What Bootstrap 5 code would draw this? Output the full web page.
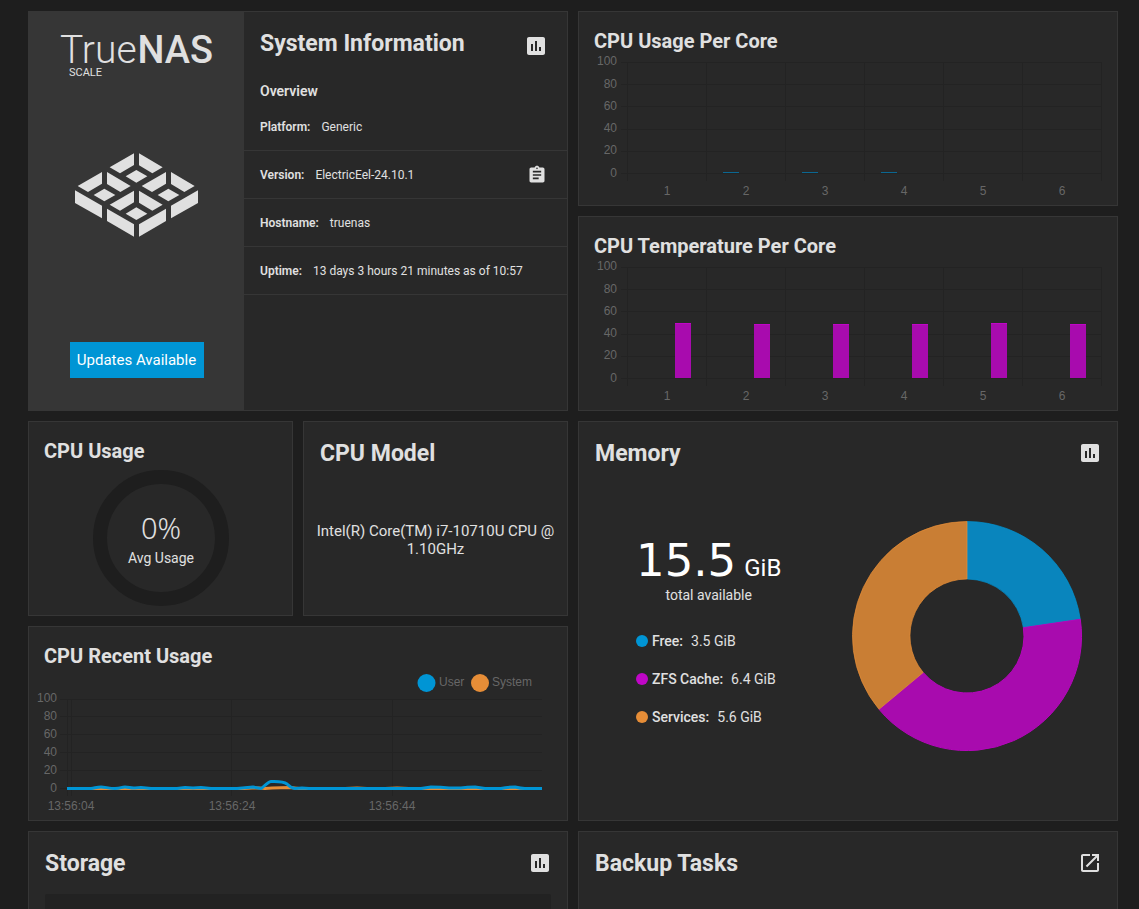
<!DOCTYPE html>
<html lang="en">
<head>
<meta charset="utf-8">
<meta name="viewport" content="width=device-width, initial-scale=1">
<title>TrueNAS Dashboard</title>
<link href="https://cdn.jsdelivr.net/npm/bootstrap@5.3.0/dist/css/bootstrap.min.css" rel="stylesheet">
<style>
  :root { --bg1: #1e1e1e; --bg2: #282828; --lines: #363636; --fg: #e0e0e0; --blue: #0095d5; --violet: #c006c7; --orange: #e68d37; }
  body { background: var(--bg1); color: var(--fg); font-family: Roboto, sans-serif; font-size: 14px; }
  .dashboard { display: grid; grid-template-columns: repeat(4, minmax(0, 1fr)); grid-auto-rows: 195px; gap: 10px; padding: 11px 21px 11px 28px; }
  .span-2 { grid-column: span 2; }
  .tall { grid-row: span 2; }
  .widget { background: var(--bg2); border: 1px solid var(--lines); min-width: 0; overflow: hidden; }
  .widget h3 { font-size: 23px; line-height: 28px; font-weight: 700; margin: 0; }
  .widget-head { height: 62px; padding: 0 15px 0 16px; }
  .widget-head h3 { padding-top: 2px; }
  .widget .chart-head { height: 44px; padding: 15px 15px 0; font-size: 20px; }
  .icon-btn { background: none; border: 0; padding: 0; color: inherit; line-height: 0; display: block; }
  .icon-btn svg { fill: currentColor; }
  .brand-pane { width: 215px; background: var(--lines); padding: 20px 0 32px; }
  .wordmark { overflow: visible; margin-bottom: 69px; }
  .update-btn { background: var(--blue); color: #fff; border: 0; border-radius: 0; width: 134px; height: 36px; padding: 1px 0 0; font-size: 15px; }
  .info-head { height: 68px; padding: 0 19px 22px 16px; }
  .overview { font-size: 14px; line-height: 22px; font-weight: 600; margin: 0 0 1px; padding: 0 16px; }
  .info-row { height: 48px; border-bottom: 1px solid var(--lines); padding: 0 20px 0 16px; font-size: 12px; gap: 11px; }
  .info-row strong { font-weight: 600; }
  .plot { width: 100%; display: block; overflow: visible; font: 12px "Liberation Sans", sans-serif; }
  .plot text { fill: #676767; }
  .plot .gridline { stroke: #232323; stroke-width: 1; fill: none; }
  .gauge-value { font: 300 29px "Noto Sans", sans-serif; }
  .cpu-model { font-size: 15px; line-height: 18px; padding: 38px 12px 0; }
  .memory-body { padding: 37px 35px 0 57px; }
  .mem-total { font: 45px/48px "DejaVu Sans", sans-serif; color: #fff; }
  .mem-unit { font: 24px/28px Roboto, sans-serif; color: #fff; }
  .legend-row { height: 38px; }
  .legend-row strong { font-weight: 500; }
  .dot { width: 12px; height: 12px; border-radius: 50%; }
  .dot-free { background: var(--blue); }
  .dot-cache { background: var(--violet); }
  .dot-services { background: var(--orange); }
  .pool-box { background: #222; height: 120px; margin: 0 16px; border-radius: 2px; }
</style>
</head>
<body class="vh-100 overflow-hidden">
<svg class="d-none" aria-hidden="true">
  <symbol id="i-chart" viewBox="0 0 24 24"><path d="M19 3H5c-1.1 0-2 .9-2 2v14c0 1.100.9 2 2 2h14c1.100 0 2-.9 2-2V5c0-1.100-.9-2-2-2zM9 17H7v-7h2v7zm4 0h-2V7h2v10zm4 0h-2v-4h2v4z"/></symbol>
  <symbol id="i-clip" viewBox="0 0 24 24"><path d="M19 3h-4.180C14.400 1.840 13.300 1 12 1c-1.300 0-2.400.84-2.820 2H5c-1.100 0-2 .9-2 2v14c0 1.100.9 2 2 2h14c1.100 0 2-.9 2-2V5c0-1.100-.9-2-2-2zm-7 0c.55 0 1 .45 1 1s-.45 1-1 1-1-.45-1-1 .45-1 1-1zm2 14H7v-2h7v2zm3-4H7v-2h10v2zm0-4H7V7h10v2z"/></symbol>
  <symbol id="i-open" viewBox="0 0 24 24"><path d="M19 19H5V5h7V3H5c-1.110 0-2 .9-2 2v14c0 1.100.89 2 2 2h14c1.100 0 2-.9 2-2v-7h-2v7zM14 3v2h3.590l-9.830 9.830 1.410 1.410L19 6.410V10h2V3h-7z"/></symbol>
  <symbol id="cell" viewBox="0 0 369 252" overflow="visible"><path d="M177 1v35l-42 25-31-18zM192 1l71 42-31 18-40-24zM184 51l33 19-33 19-32-19z"/></symbol>
</svg>

<main class="dashboard">

  <section class="widget span-2 tall d-flex">
    <div class="brand-pane d-flex flex-column align-items-center flex-shrink-0">
      <svg class="wordmark" width="156" height="52" viewBox="0 0 156 52" fill="#e0e0e0" role="img" aria-label="TrueNAS SCALE" font-family="Roboto, sans-serif">
        <text x="1" y="31" font-size="39" font-weight="300">True</text>
        <text x="154" y="31" font-size="38" font-weight="500" text-anchor="end">NAS</text>
        <text x="10" y="44" font-size="11" font-weight="400">SCALE</text>
      </svg>
      <svg class="mb-auto" width="123" height="84" viewBox="0 0 369 252" fill="#e0e0e0" aria-hidden="true">
        <use href="#cell" width="369" height="252"/>
        <use href="#cell" x="-96" y="56" width="369" height="252"/>
        <use href="#cell" x="96" y="56" width="369" height="252"/>
        <use href="#cell" y="112" width="369" height="252"/>
        <path d="M0 112l81 46v38L0 150zM96 167l81 47v37l-81-47zM192 214l81-47v37l-81 47zM288 158l81-46v38l-81 46z"/>
      </svg>
      <button class="btn update-btn" type="button">Updates Available</button>
    </div>
    <div class="flex-grow-1">
      <div class="info-head d-flex align-items-end justify-content-between">
        <h3>System Information</h3>
        <button class="icon-btn" type="button" aria-label="System reports"><svg width="24" height="24"><use href="#i-chart"/></svg></button>
      </div>
      <h4 class="overview">Overview</h4>
      <div class="info-row d-flex align-items-center"><strong>Platform:</strong><span>Generic</span></div>
      <div class="info-row d-flex align-items-center"><strong>Version:</strong><span>ElectricEel-24.10.1</span>
        <button class="icon-btn ms-auto" type="button" aria-label="Copy version"><svg width="20" height="20"><use href="#i-clip"/></svg></button></div>
      <div class="info-row d-flex align-items-center"><strong>Hostname:</strong><span>truenas</span></div>
      <div class="info-row d-flex align-items-center"><strong>Uptime:</strong><span>13 days 3 hours 21 minutes as of 10:57</span></div>
    </div>
  </section>

  <section class="widget span-2">
    <h3 class="chart-head">CPU Usage Per Core</h3>
    <svg class="plot" viewBox="0 0 538 148" role="img" aria-label="CPU usage per core">
      <path class="gridline" d="M42 6.500H523M42 28.500H523M42 50.500H523M42 73.500H523M42 95.500H523M42 117.500H523M48.500 6V125M127.500 6V125M206.500 6V125M285.500 6V125M364.500 6V125M443.500 6V125M522.500 6V125"/>
      <g text-anchor="end"><text x="38" y="9">100</text><text x="38" y="32">80</text><text x="38" y="54">60</text><text x="38" y="76">40</text><text x="38" y="98">20</text><text x="38" y="121">0</text></g>
      <g text-anchor="middle"><text x="88" y="139">1</text><text x="167" y="139">2</text><text x="246" y="139">3</text><text x="325" y="139">4</text><text x="404" y="139">5</text><text x="483" y="139">6</text></g>
      <path fill="#0b6791" d="M144 116h16v1h-16zM223 116h16v1h-16zM302 116h16v1h-16z"/>
    </svg>
  </section>

  <section class="widget span-2">
    <h3 class="chart-head">CPU Temperature Per Core</h3>
    <svg class="plot" viewBox="0 0 538 148" role="img" aria-label="CPU temperature per core">
      <path class="gridline" d="M42 6.500H523M42 28.500H523M42 50.500H523M42 73.500H523M42 95.500H523M42 117.500H523M48.500 6V125M127.500 6V125M206.500 6V125M285.500 6V125M364.500 6V125M443.500 6V125M522.500 6V125"/>
      <g text-anchor="end"><text x="38" y="9">100</text><text x="38" y="32">80</text><text x="38" y="54">60</text><text x="38" y="76">40</text><text x="38" y="98">20</text><text x="38" y="121">0</text></g>
      <g text-anchor="middle"><text x="88" y="139">1</text><text x="167" y="139">2</text><text x="246" y="139">3</text><text x="325" y="139">4</text><text x="404" y="139">5</text><text x="483" y="139">6</text></g>
      <path fill="#a80bae" d="M96 62h16v55H96zM175 63h16v54h-16zM254 63h16v54h-16zM333 63h16v54h-16zM412 62h16v55h-16zM491 63h16v54h-16z"/>
      <path fill="#c006c7" d="M96 62h16v1H96zM175 63h16v1h-16zM254 63h16v1h-16zM333 63h16v1h-16zM412 62h16v1h-16zM491 63h16v1h-16z"/>
    </svg>
  </section>

  <section class="widget">
    <h3 class="chart-head">CPU Usage</h3>
    <svg class="d-block mx-auto mt-1" width="136" height="136" viewBox="0 0 136 136" fill="#e0e0e0" text-anchor="middle" role="img" aria-label="0% average usage">
      <circle cx="68" cy="68" r="61" fill="none" stroke="#1e1e1e" stroke-width="14"/>
      <text class="gauge-value" x="68" y="69">0%</text>
      <text x="68" y="93" font-size="14">Avg Usage</text>
    </svg>
  </section>

  <section class="widget">
    <div class="widget-head d-flex align-items-center"><h3>CPU Model</h3></div>
    <p class="cpu-model text-center m-0">Intel(R) Core(TM) i7-10710U CPU @ 1.10GHz</p>
  </section>

  <section class="widget span-2 tall">
    <div class="widget-head d-flex align-items-center justify-content-between">
      <h3>Memory</h3>
      <button class="icon-btn" type="button" aria-label="Memory reports"><svg width="24" height="24"><use href="#i-chart"/></svg></button>
    </div>
    <div class="memory-body d-flex align-items-start justify-content-between">
      <div class="pt-3">
        <div class="d-flex align-items-baseline gap-2"><span class="mem-total">15.5</span><span class="mem-unit">GiB</span></div>
        <div class="text-center">total available</div>
        <div class="pt-3">
          <div class="legend-row d-flex align-items-center"><span class="dot dot-free me-1"></span><strong class="me-2">Free:</strong>3.5 GiB</div>
          <div class="legend-row d-flex align-items-center"><span class="dot dot-cache me-1"></span><strong class="me-2">ZFS Cache:</strong>6.4 GiB</div>
          <div class="legend-row d-flex align-items-center"><span class="dot dot-services me-1"></span><strong class="me-2">Services:</strong>5.6 GiB</div>
        </div>
      </div>
      <svg width="230" height="230" viewBox="-115 -115 230 230" role="img" aria-label="Memory split">
        <path fill="#0985bd" stroke="#0095d5" stroke-opacity=".7" d="M0-114.500A114.500 114.500 0 0 1 113.300-16.700L56.400-8.300A57 57 0 0 0 0-57z"/>
        <path fill="#a80bae" stroke="#b507bb" d="M113.300-16.700A114.500 114.500 0 0 1-88 73.300L-43.800 36.500A57 57 0 0 0 56.400-8.300z"/>
        <path fill="#c97e34" stroke="#e68d37" stroke-opacity=".7" d="M-88 73.300A114.500 114.500 0 0 1 0-114.500V-57A57 57 0 0 0-43.800 36.500z"/>
      </svg>
    </div>
  </section>

  <section class="widget span-2">
    <h3 class="chart-head">CPU Recent Usage</h3>
    <svg class="plot" viewBox="0 0 538 149" role="img" aria-label="CPU recent usage">
      <circle cx="397.500" cy="12" r="9" fill="#0095d5"/><text x="410" y="15">User</text>
      <circle cx="451" cy="12" r="9" fill="#e68d37"/><text x="463" y="15">System</text>
      <path class="gridline" d="M31 28.500H513M31 45.500H513M31 63.500H513M31 81.500H513M31 99.500H513M31 117.500H513M38.500 28V125M42.500 28V125M202.500 28V125M363.500 28V125"/>
      <g text-anchor="end"><text x="28" y="31">100</text><text x="28" y="49">80</text><text x="28" y="67">60</text><text x="28" y="85">40</text><text x="28" y="103">20</text><text x="28" y="121">0</text></g>
      <g text-anchor="middle"><text x="42" y="139">13:56:04</text><text x="203" y="139">13:56:24</text><text x="363" y="139">13:56:44</text></g>
      <g fill="none" stroke-width="3" stroke-linejoin="round">
        <path stroke="#e68d37" d="M38 117.500H215L223 117H230L236 117.500L243 117L261 116.500L270 117.500H316L328 117L338 117.500H356L368 117L380 117.500H513"/>
        <path stroke="#0095d5" d="M38 117.500H62C66 117 68 116 72 116S80 117.500 86 117.500S92 116 96 116S102 117.500 106 117L112 116.500L122 117.500H148L156 116.500L164 117L172 116.500L182 117.500H208L224 116L232 117.500C234 117 238 111 242 110.500Q254 110 258 113Q262 117 266 117.500L273 117L280 117.500H392L402 116Q412 116 420 117H432Q438 116 446 116L456 117.500H472Q478 116 486 116Q492 117.500 496 117.500H513"/>
      </g>
    </svg>
  </section>

  <section class="widget span-2 tall">
    <div class="widget-head d-flex align-items-center justify-content-between">
      <h3>Storage</h3>
      <button class="icon-btn" type="button" aria-label="Storage reports"><svg width="24" height="24"><use href="#i-chart"/></svg></button>
    </div>
    <div class="pool-box"></div>
  </section>

  <section class="widget span-2 tall">
    <div class="widget-head d-flex align-items-center justify-content-between">
      <h3>Backup Tasks</h3>
      <a class="icon-btn" href="#" aria-label="Open data protection"><svg width="24" height="24"><use href="#i-open"/></svg></a>
    </div>
  </section>
</main>
<script src="https://cdn.jsdelivr.net/npm/bootstrap@5.3.0/dist/js/bootstrap.bundle.min.js"></script>
</body>
</html>
